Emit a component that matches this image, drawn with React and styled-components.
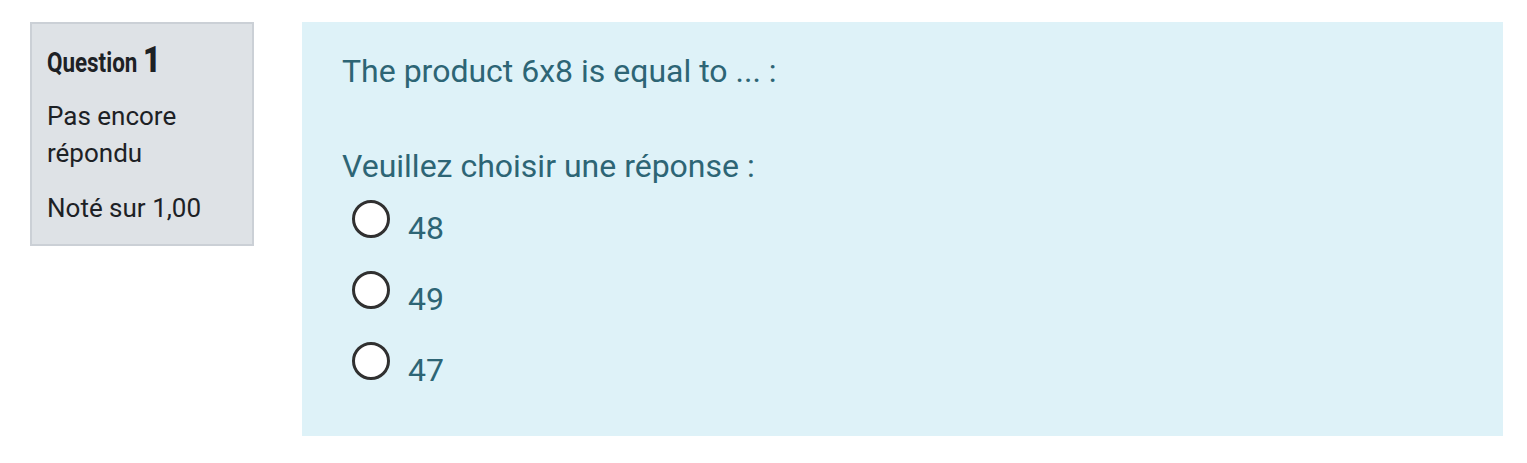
import React from 'react'
import styled, {createGlobalStyle} from 'styled-components'

const Global = createGlobalStyle`
  body {
    margin: 0;
    background: #fff;
    font-family: Roboto, "Liberation Sans", sans-serif;
    color: #1d2125;
  }
`

const Page = styled.div`
  display: flex;
  align-items: flex-start;
  gap: 48px;
  padding: 22px 24px 26px 30px;
`

const Info = styled.div`
  flex: 0 0 224px;
  box-sizing: border-box;
  height: 224px;
  padding: 16px 15px 0;
  background: #dee2e6;
  border: 2px solid #cbd0d6;
`

const Title = styled.h3`
  margin: 0 0 15px;
  font-weight: 700;
  font-size: 27px;
  line-height: 40px;
  color: #1d2125;
`

const Condensed = styled.span`
  display: inline-block;
  transform: scaleX(0.83);
  transform-origin: left center;
  white-space: nowrap;
  b {
    font-size: 37px;
  }
`

const Meta = styled.div`
  font-size: 26px;
  line-height: 37px;
  margin-bottom: 18px;
`

const Formulation = styled.div`
  flex: 1;
  box-sizing: border-box;
  height: 414px;
  padding: 30px 40px;
  background: #def2f8;
  color: #2d6575;
`

const QText = styled.p`
  margin: 0 0 57px;
  font-size: 32px;
  line-height: 38px;
`

const Prompt = styled.p`
  margin: 0 0 15px;
  font-size: 32px;
  line-height: 38px;
`

const Option = styled.label`
  display: flex;
  align-items: flex-start;
  height: 71px;
  font-size: 32px;
  line-height: 38px;
`

const Radio = styled.span`
  flex: 0 0 auto;
  box-sizing: border-box;
  width: 38px;
  height: 38px;
  margin: 0 18px 0 10px;
  border-radius: 50%;
  border: 3px solid #303030;
  background: #fff;
`

const OptionText = styled.span`
  padding-top: 9px;
`

const answers = ['48', '49', '47']

export default function App() {
  return (
    <>
      <Global />
      <Page>
        <Info>
          <Title><Condensed>Question <b>1</b></Condensed></Title>
          <Meta>Pas encore répondu</Meta>
          <Meta>Noté sur 1,00</Meta>
        </Info>
        <Formulation>
          <QText>The product 6x8 is equal to ... :</QText>
          <Prompt>Veuillez choisir une réponse :</Prompt>
          {answers.map(a => (
            <Option key={a}>
              <Radio />
              <OptionText>{a}</OptionText>
            </Option>
          ))}
        </Formulation>
      </Page>
    </>
  )
}
